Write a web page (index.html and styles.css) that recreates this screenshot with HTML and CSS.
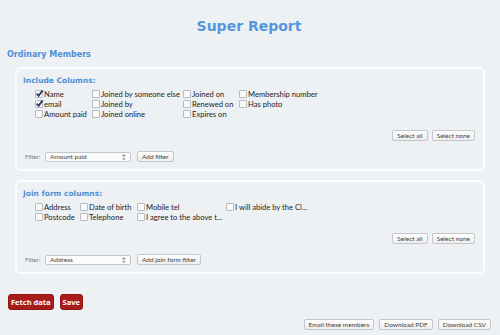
FILE: index.html
```
<!DOCTYPE html>
<html>
<head>
    <title>Super Report</title>
    <link rel="stylesheet" href="styles.css">
</head>
<body>
    <h1 class="title">Super Report</h1>
    <h2 class="group-title">Ordinary Members</h2>

    <div class="panel">
        <h3 class="panel-title">Include Columns:</h3>
        <div class="cols cols-main">
            <label class="col"><span class="box checked"><svg viewBox="0 0 8 8"><path d="M1.5 4.2 L3.2 6 L6.8 1.2"/></svg></span>Name</label>
            <label class="col"><span class="box"></span>Joined by someone else</label>
            <label class="col"><span class="box"></span>Joined on</label>
            <label class="col"><span class="box"></span>Membership number</label>
            <label class="col"><span class="box checked"><svg viewBox="0 0 8 8"><path d="M1.5 4.2 L3.2 6 L6.8 1.2"/></svg></span>email</label>
            <label class="col"><span class="box"></span>Joined by</label>
            <label class="col"><span class="box"></span>Renewed on</label>
            <label class="col"><span class="box"></span>Has photo</label>
            <label class="col"><span class="box"></span>Amount paid</label>
            <label class="col"><span class="box"></span>Joined online</label>
            <label class="col"><span class="box"></span>Expires on</label>
        </div>
        <div class="select-row">
            <button class="btn">Select all</button>
            <button class="btn">Select none</button>
        </div>
        <div class="filter-row">
            <span class="filter-label">Filter:</span>
            <span class="select">Amount paid<span class="arrows">&#8597;</span></span>
            <button class="btn">Add filter</button>
        </div>
    </div>

    <div class="panel">
        <h3 class="panel-title">Join form columns:</h3>
        <div class="cols cols-join">
            <label class="col"><span class="box"></span>Address</label>
            <label class="col"><span class="box"></span>Date of birth</label>
            <label class="col"><span class="box"></span>Mobile tel</label>
            <label class="col"><span class="box"></span>I will abide by the Cl...</label>
            <label class="col"><span class="box"></span>Postcode</label>
            <label class="col"><span class="box"></span>Telephone</label>
            <label class="col"><span class="box"></span>I agree to the above t...</label>
        </div>
        <div class="select-row">
            <button class="btn">Select all</button>
            <button class="btn">Select none</button>
        </div>
        <div class="filter-row">
            <span class="filter-label">Filter:</span>
            <span class="select">Address<span class="arrows">&#8597;</span></span>
            <button class="btn">Add join form filter</button>
        </div>
    </div>

    <div class="actions">
        <button class="red-btn">Fetch data</button>
        <button class="red-btn">Save</button>
    </div>

    <div class="downloads">
        <button class="btn">Email these members</button>
        <button class="btn">Download PDF</button>
        <button class="btn">Download CSV</button>
    </div>
</body>
</html>
```

FILE: styles.css
```
body {
    background-color: #eef1f4;
    color: #222;
    font-family: Lato, "Open Sans", sans-serif;
    margin: 0;
    padding: 0 9px 0 7px;
}
.title {
    font-family: "DejaVu Sans", Verdana, sans-serif;
    font-size: 14px;
    font-weight: bold;
    color: #5596de;
    text-align: center;
    margin: 17px 0 0 0;
    line-height: 18px;
}
.group-title {
    font-family: "DejaVu Sans", Verdana, sans-serif;
    font-size: 8px;
    font-weight: bold;
    color: #4d8fd8;
    margin: 14px 0 0 0;
    line-height: 12px;
}
.panel {
    margin: 6px 6px 0 8px;
    border: 2px solid #fbfcfd;
    border-radius: 6px;
    padding: 6px 8px 7px 6px;
}
.panel + .panel {
    margin-top: 9px;
}
.panel-title {
    font-family: "DejaVu Sans", Verdana, sans-serif;
    font-size: 7.5px;
    font-weight: bold;
    color: #4d8fd8;
    margin: 0 0 2px 0;
    line-height: 12px;
}
.cols {
    display: grid;
    margin-left: 12px;
    font-size: 7.6px;
    line-height: 10px;
    color: #222;
}
.cols-main {
    grid-template-columns: 57px 91px 56px auto;
}
.cols-join {
    grid-template-columns: 45px 57px 89px auto;
}
.col {
    display: flex;
    align-items: center;
    white-space: nowrap;
}
.box {
    width: 6px;
    height: 6px;
    border: 1px solid #b8bcc2;
    border-radius: 1px;
    background: #fafafa;
    margin-right: 1px;
    display: inline-block;
    position: relative;
}
.box svg {
    position: absolute;
    left: -1px;
    top: -2px;
    width: 9px;
    height: 9px;
    fill: none;
    stroke: #2a3a6a;
    stroke-width: 1.6;
}
.select-row {
    display: flex;
    justify-content: flex-end;
    gap: 4px;
    margin-top: 11px;
}
.btn {
    font-family: Lato, "Open Sans", sans-serif;
    font-size: 6.5px;
    color: #444;
    background: linear-gradient(#fdfdfd, #eeeeee);
    border: 1px solid #c4c6c9;
    border-radius: 2px;
    padding: 0 4px;
    height: 11px;
    line-height: 9px;
    margin: 0;
}
.filter-row {
    display: flex;
    align-items: center;
    margin-top: 10px;
    margin-left: 2px;
}
.filter-label {
    font-size: 6px;
    color: #777;
    width: 20px;
}
.select {
    display: flex;
    justify-content: space-between;
    align-items: center;
    box-sizing: border-box;
    width: 86px;
    height: 10px;
    border: 1px solid #c4c6c9;
    border-radius: 2px;
    background: #fbfbfb;
    font-size: 6.5px;
    color: #444;
    padding: 0 4px;
    margin-right: 6px;
}
.arrows {
    font-size: 6px;
    color: #666;
}
.actions {
    display: flex;
    gap: 6px;
    margin: 20px 0 0 1px;
}
.red-btn {
    font-family: "Open Sans", sans-serif;
    font-size: 7.5px;
    font-weight: bold;
    color: #fff;
    background: #a81c1c;
    border: 1px solid #8e1515;
    border-radius: 3px;
    padding: 0 2px;
    height: 16px;
    line-height: 14px;
    margin: 0;
}
.downloads {
    display: flex;
    justify-content: flex-end;
    gap: 5px;
    margin-top: 9px;
}
```
